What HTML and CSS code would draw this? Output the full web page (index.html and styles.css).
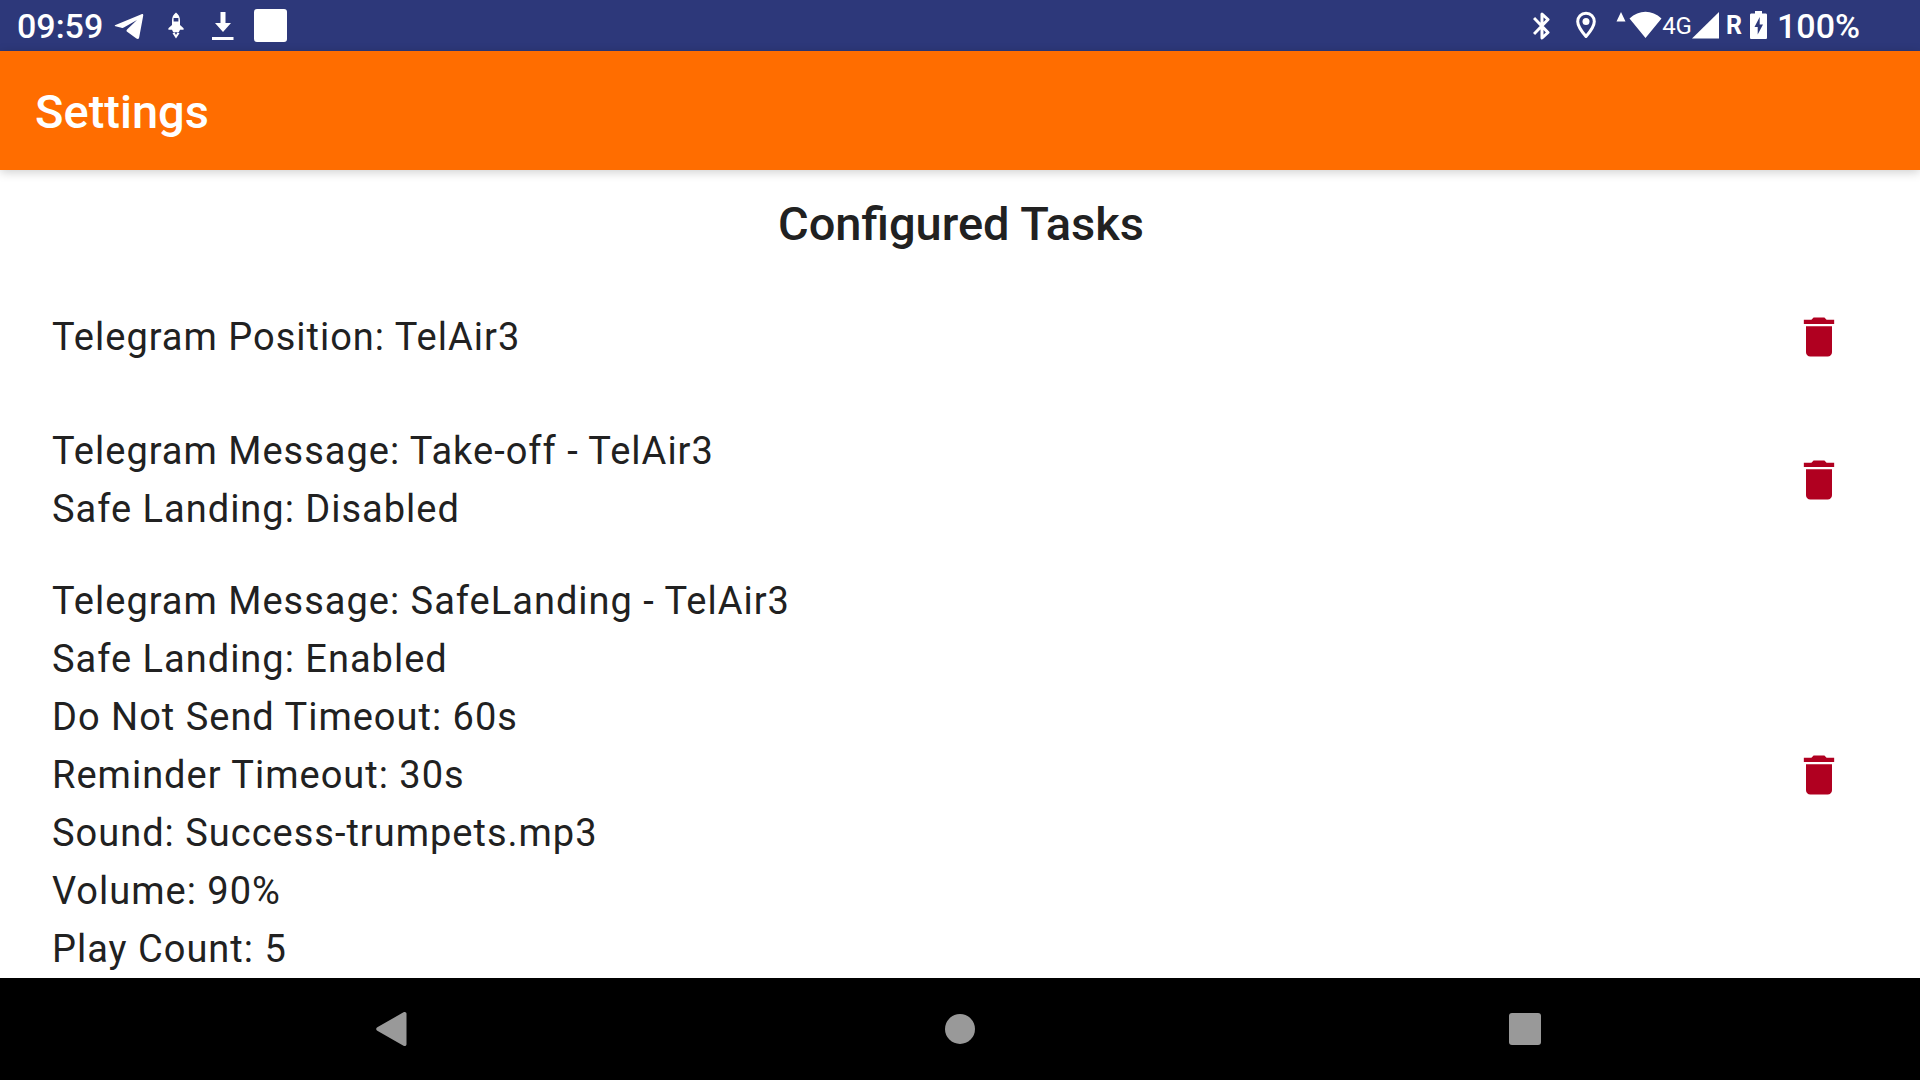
FILE: index.html
```html
<!DOCTYPE html>
<html lang="en">
<head>
<meta charset="utf-8">
<meta name="viewport" content="width=device-width, initial-scale=1">
<title>Settings</title>
<link rel="stylesheet" href="styles.css">
</head>
<body>
<svg class="sprite" aria-hidden="true">
  <symbol id="trash" viewBox="0 0 24 24"><path d="M6 19c0 1.100.9 2 2 2h8c1.100 0 2-.9 2-2V7H6v12zM19 4h-3.500l-1-1h-5l-1 1H5v2h14V4z"/></symbol>
</svg>
<div class="screen">
  <div class="status">
    <div class="status-left">
      <time class="clock">09:59</time>
      <svg width="30" height="35" viewBox="0 0 30 35"><path d="M1.500 17 27.500 6.200c1.300-.5 2 .2 1.700 1.500l-4 21.500c-.3 1.800-1.400 2.200-2.800 1.300L13.500 24c-1.300-.9-1.300-1.700-.2-2.800L23 12 9.800 19.600c-.8.4-1.500.4-2.400.1L1.500 18.200c-1-.3-1-.8 0-1.200z"/></svg>
      <svg width="16" height="35" viewBox="0 0 16 35"><path fill-rule="evenodd" d="M8 4.500c2.800 2 4 4.800 4 8v4.500l3.600 3.200v1.600H12l-1.200 2.500H5.200L4 21.800H.4v-1.600L4 17v-4.500c0-3.200 1.200-6 4-8zM5.600 10v3.600h4.800V10zM4.500 25.300 6.600 24.500 8 27l1.400-2.500 2.100.8L8 30.500z"/></svg>
      <svg class="download" width="22" height="35" viewBox="0 0 22 35"><path d="M8.500 4h5v11h5.500L11 24 3 15h5.500zM0 29h21.500v3H0z"/></svg>
      <svg width="33" height="35" viewBox="0 0 33 35"><rect y="1" width="33" height="33" rx="3"/></svg>
    </div>
    <div class="status-right">
      <svg width="17" height="35" viewBox="0 0 17 35"><path class="line" d="M1 10 15 24.500 9 30V6l6 5.500L1 26"/></svg>
      <svg class="pin" width="20" height="35" viewBox="0 0 20 35"><path class="line" d="M10 5.300c-5 0-8.300 3.700-8.300 8.200C1.700 19 10 28.500 10 28.500s8.300-9.500 8.300-15C18.300 9 15 5.300 10 5.300z"/><circle cx="10" cy="13.500" r="3.500"/></svg>
      <div class="network">
        <svg width="46" height="35" viewBox="0 0 46 35"><path d="M5 4l4.500 9.500h-9zM13.500 10.500C23 1.500 36 1.500 45.500 10.500L29.500 30z"/></svg>
        <span class="net">4G</span>
        <svg width="28" height="35" viewBox="0 0 28 35"><path d="M27 4v26.500H0z"/></svg>
      </div>
      <span class="roaming">R</span>
      <svg width="17" height="35" viewBox="0 0 17 35"><path fill-rule="evenodd" d="M5 3h7v2.500h3.500c1 0 1.500.5 1.500 1.500v22.500c0 1-.5 1.500-1.500 1.500h-14C.5 31 0 30.500 0 29.500V7c0-1 .5-1.500 1.500-1.500H5zM9.700 9 4.500 19h3.200v7.500L13 16.500H9.700z"/></svg>
      <span class="battery">100%</span>
    </div>
  </div>
  <header class="appbar"><h1>Settings</h1></header>
  <main class="content">
    <h2>Configured Tasks</h2>
    <ul class="tasks">
      <li>
        <div><p>Telegram Position: TelAir3</p></div>
        <button class="delete" type="button" aria-label="Delete task"><svg><use href="#trash"/></svg></button>
      </li>
      <li>
        <div>
          <p>Telegram Message: Take-off - TelAir3</p>
          <p>Safe Landing: Disabled</p>
        </div>
        <button class="delete" type="button" aria-label="Delete task"><svg><use href="#trash"/></svg></button>
      </li>
      <li>
        <div>
          <p>Telegram Message: SafeLanding - TelAir3</p>
          <p>Safe Landing: Enabled</p>
          <p>Do Not Send Timeout: 60s</p>
          <p>Reminder Timeout: 30s</p>
          <p>Sound: Success-trumpets.mp3</p>
          <p>Volume: 90%</p>
          <p>Play Count: 5</p>
        </div>
        <button class="delete" type="button" aria-label="Delete task"><svg><use href="#trash"/></svg></button>
      </li>
    </ul>
  </main>
  <nav class="navbar" aria-label="System">
    <button type="button" aria-label="Back"><svg width="40" height="40" viewBox="0 0 40 40"><path d="M2.300 18.300 28.500 3.300c1.500-.9 3-.1 3 1.500v30.400c0 1.600-1.500 2.400-3 1.500L2.300 21.700c-1.500-.9-1.500-2.500 0-3.400z"/></svg></button>
    <button type="button" aria-label="Home"><svg width="40" height="40" viewBox="0 0 40 40"><circle cx="20" cy="20" r="15"/></svg></button>
    <button type="button" aria-label="Recent apps"><svg width="40" height="40" viewBox="0 0 40 40"><rect x="4" y="4" width="32" height="32" rx="3"/></svg></button>
  </nav>
</div>
</body>
</html>
```
FILE: styles.css
```css
* { box-sizing: border-box; }
body, h1, h2, p, ul { margin: 0; padding: 0; }
body { font-family: Roboto, "Liberation Sans", sans-serif; color: #212121; background: #fff; }
button { border: 0; padding: 0; background: none; display: grid; place-items: center; cursor: pointer; }
.sprite { display: none; }

.screen { display: flex; flex-direction: column; height: 100vh; }

.status {
  display: flex; align-items: center; justify-content: space-between;
  height: 51px; flex: none; padding: 0 60px 0 17px;
  background: #2d387a; color: #fff; font-size: 34px; font-weight: 500;
}
.status svg { display: block; flex: none; fill: #fff; }
.status .line { fill: none; stroke: #fff; stroke-width: 3; stroke-linejoin: round; }
.status-left, .status-right, .network { display: flex; align-items: center; }
.status-left { gap: 24px; }
.clock { margin-right: -13px; }
.download { margin: 0 -4px 0 4px; }
.status-right { gap: 10px; }
.pin { margin: 0 10px 0 16px; }
.network { margin-right: -4px; }
.net { font-size: 24px; font-weight: 400; }
.roaming { font-size: 25px; font-weight: 700; margin-right: -2px; }

.appbar {
  display: flex; align-items: center; flex: none; height: 119px; padding: 2px 35px 0;
  background: #ff6d00; color: #fff; z-index: 1;
  box-shadow: 0 2px 10px rgba(0, 0, 0, .2);
}
h1, h2 { font-size: 47px; font-weight: 500; line-height: 58px; }

.content { flex: 1; min-height: 0; overflow-y: auto; scrollbar-width: none; padding: 25px 50px 0 52px; }
h2 { text-align: center; margin-bottom: 33px; }
.tasks { list-style: none; display: flex; flex-direction: column; gap: 34px; }
.tasks li {
  display: flex; align-items: center; justify-content: space-between;
  font-size: 38px; line-height: 58px; letter-spacing: 1px;
}
.delete { width: 102px; height: 102px; flex: none; }
.delete svg { width: 52px; height: 52px; fill: #b00020; }

.navbar { display: grid; grid-template-columns: repeat(3, 1fr); flex: none; height: 102px; padding: 0 112px; background: #000; }
.navbar button { width: 100%; }
.navbar svg { fill: #999; }
```
